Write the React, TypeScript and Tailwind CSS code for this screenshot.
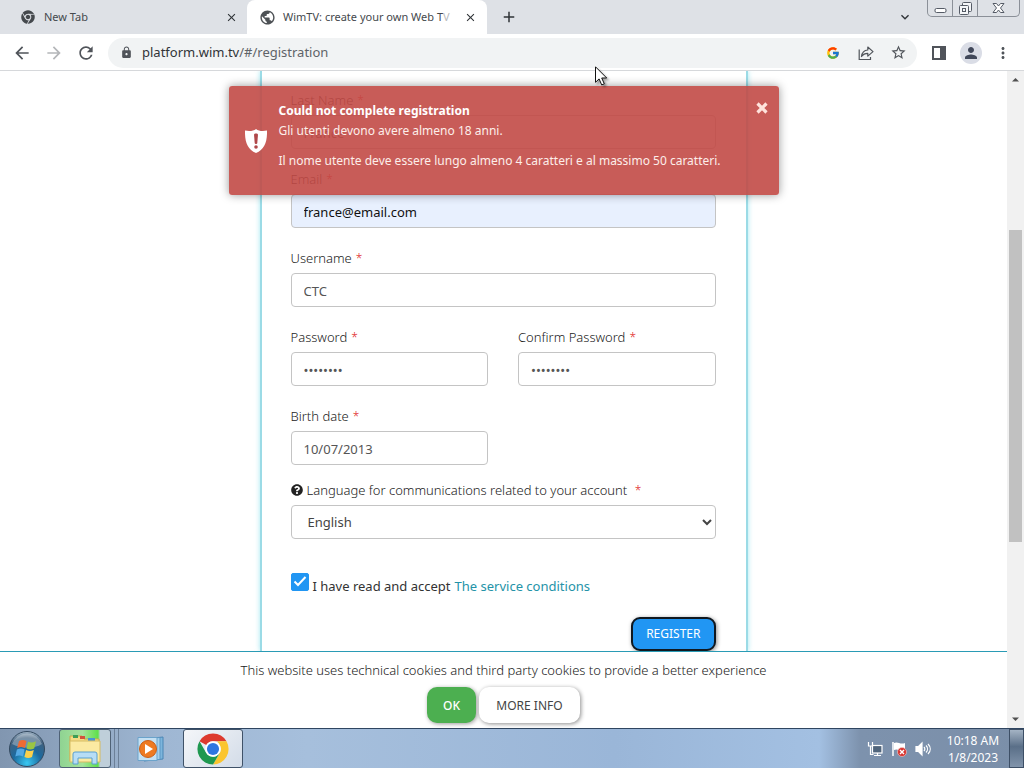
import type { ReactNode } from "react";
import { FaChrome, FaQuestionCircle } from "react-icons/fa";
import { FcGoogle } from "react-icons/fc";
import {
  MdAdd,
  MdArrowBack,
  MdArrowForward,
  MdClose,
  MdKeyboardArrowDown,
  MdLock,
  MdMoreVert,
  MdPerson,
  MdPublic,
  MdRefresh,
  MdStarBorder,
} from "react-icons/md";

const fieldClass =
  "h-[34px] w-full rounded-[4px] border border-[#c4c4c4] px-3 pt-0.5 text-[13px] outline-none";

function Label({ htmlFor, children }: { htmlFor: string; children: ReactNode }) {
  return (
    <label htmlFor={htmlFor} className="flex h-5 items-center pt-0.5 text-[13px] font-light text-[#222]">
      {children}
      <span className="ml-1 text-[12px] text-[#e02020]">*</span>
    </label>
  );
}

function Field({
  id,
  label,
  value,
  type = "text",
  className = "bg-white text-[#555]",
}: {
  id: string;
  label: string;
  value: string;
  type?: string;
  className?: string;
}) {
  return (
    <div className="flex min-w-0 flex-1 flex-col gap-[5px]">
      <Label htmlFor={id}>{label}</Label>
      <input id={id} type={type} defaultValue={value} className={`${fieldClass} ${className}`} />
    </div>
  );
}

function WindowControls() {
  return (
    <div className="mr-1 flex h-[17px] w-[93px] shrink-0 self-start rounded-b-[5px] border border-t-0 border-[#8b9098] text-[#555b66]">
      <button aria-label="Minimize" className="flex flex-1 items-center justify-center border-r border-[#8b9098]">
        <svg width="13" height="16" viewBox="0 0 13 16" fill="#fff" stroke="currentColor">
          <rect x="1" y="8.5" width="11" height="4" rx="1.5" />
        </svg>
      </button>
      <button aria-label="Restore" className="flex flex-1 items-center justify-center border-r border-[#8b9098]">
        <svg width="14" height="16" viewBox="0 0 14 16" fill="#f4f6f8" stroke="currentColor">
          <rect x="4.500" y="2.500" width="9" height="9" rx="1" />
          <rect x="1.500" y="5.500" width="9" height="9" rx="1" />
          <rect x="4.500" y="8.500" width="3" height="3" />
        </svg>
      </button>
      <button aria-label="Close window" className="flex w-[41px] items-center justify-center">
        <svg width="13" height="16" viewBox="0 0 13 16" fill="#fff" stroke="currentColor">
          <path d="M1 3.500h3.500l2 2.500 2-2.500H12L8.500 8l3.500 4.500H8.500l-2-2.500-2 2.500H1L4.500 8z" />
        </svg>
      </button>
    </div>
  );
}

function TabBar() {
  return (
    <header className="flex h-[34px] shrink-0 items-center bg-[#dee1e6] text-[11px] text-[#45494d]">
      <div className="flex h-full w-[247px] shrink-0 items-center rounded-br-lg pr-[7px] pl-[21px]">
        <FaChrome size={14} />
        <span className="ml-[9px] flex-1">New Tab</span>
        <button aria-label="Close New Tab" className="p-0.5">
          <MdClose size={13} color="#2f3337" />
        </button>
      </div>
      <div className="flex h-full w-[240px] shrink-0 items-center rounded-t-lg bg-white pr-2 pl-3">
        <MdPublic size={17} color="#4d5155" />
        <span className="ml-[7px] flex-1 whitespace-nowrap">
          WimTV: create your own Web T<span className="text-[#b9bbbd]">V</span>
        </span>
        <button aria-label="Close WimTV" className="p-0.5">
          <MdClose size={13} color="#2f3337" />
        </button>
      </div>
      <button aria-label="New tab" className="ml-[13px]">
        <MdAdd size={18} color="#2f3337" />
      </button>
      <div className="flex-1" />
      <button aria-label="Search tabs" className="mr-3.5">
        <MdKeyboardArrowDown size={16} color="#2f3337" />
      </button>
      <WindowControls />
    </header>
  );
}

function Toolbar() {
  return (
    <div className="flex h-[37px] shrink-0 items-center border-b border-[#d6d8db] bg-white px-3 pt-px text-[#50545a]">
      <button aria-label="Back">
        <MdArrowBack size={20} />
      </button>
      <button aria-label="Forward" className="ml-3 text-[#b4b6b9]">
        <MdArrowForward size={20} />
      </button>
      <button aria-label="Reload" className="ml-3">
        <MdRefresh size={20} />
      </button>
      <div className="ml-3 flex h-[30px] flex-1 items-center rounded-full bg-[#f1f3f4] pr-2.5 pl-3">
        <MdLock size={13} />
        <div className="ml-[9px] flex-1 text-[13px] text-[#5f6368]">
          <span className="text-[#303338]">platform.wim.tv</span>/#/registration
        </div>
        <FcGoogle size={14} />
        <button aria-label="Share" className="ml-[18px]">
          <svg width="16" height="16" viewBox="0 0 16 16" fill="none" stroke="currentColor" strokeWidth="1.2">
            <path d="M1.200 4.500v10h11.300v-2.500" />
            <path d="M3.500 11.500C4 7.500 6 5.200 9.800 5V2l5.200 4.600-5.200 4.500V8.300c-2.800 0-4.700.9-6.300 3.200z" strokeLinejoin="round" />
          </svg>
        </button>
        <button aria-label="Bookmark" className="ml-4">
          <MdStarBorder size={17} />
        </button>
      </div>
      <button aria-label="Side panel" className="ml-3.5">
        <svg width="16" height="16" viewBox="0 0 16 16" fill="none" stroke="currentColor" strokeWidth="2">
          <rect x="2" y="2" width="12" height="12" />
          <path d="M10 2h4v12h-4z" fill="currentColor" />
        </svg>
      </button>
      <button aria-label="Profile" className="ml-[13px] flex size-[22px] items-center justify-center rounded-full bg-[#dadde6]">
        <MdPerson size={18} color="#41485a" />
      </button>
      <button aria-label="Menu" className="ml-3">
        <MdMoreVert size={18} />
      </button>
    </div>
  );
}

function Alert() {
  return (
    <div
      role="alert"
      className="absolute inset-x-0 top-[15px] mx-auto flex h-[109px] w-full max-w-[550px] items-center rounded-[3px] bg-[#c24a46]/90 pl-4 text-[12px] leading-5 text-[#fdeeea] shadow-[0_0_10px_rgba(0,0,0,0.4)]"
    >
      <svg width="22" height="24" viewBox="0 0 22 24" className="shrink-0">
        <path d="M11 0c2.500 2 6.500 2.500 11 1.600C22.300 13 19.500 20.500 11 24 2.500 20.500-.3 13 0 1.600 4.500 2.500 8.500 2 11 0z" fill="#fff" />
        <path d="M9 5.500c0-1.500 4-1.500 4 0l-.7 8.500c-.2 1.300-2.400 1.300-2.600 0z" fill="#b0484a" />
        <circle cx="11" cy="18" r="1.800" fill="#b0484a" />
      </svg>
      <div className="ml-3 flex-1 pb-2.5">
        <h2 className="font-bold text-white">Could not complete registration</h2>
        <p>Gli utenti devono avere almeno 18 anni.</p>
        <p className="mt-2.5">Il nome utente deve essere lungo almeno 4 caratteri e al massimo 50 caratteri.</p>
      </div>
      <button aria-label="Dismiss" className="mt-4 mr-[11px] self-start">
        <svg width="12" height="12" viewBox="0 0 12 12" stroke="#ffe3dc" strokeWidth="3.200">
          <path d="M1.500 1.500l9 9M10.500 1.500l-9 9" />
        </svg>
      </button>
    </div>
  );
}

function RegistrationForm() {
  return (
    <form className="mx-auto flex w-full max-w-[488px] flex-col border-x-2 border-[#9bdbe6] pt-[19px] pr-[30px] pl-[29px] shadow-[0_0_5px_rgba(120,220,235,0.7)]">
      <div className="flex flex-col gap-5">
        <Field id="last-name" label="Last Name" value="France" />
        <Field id="email" label="Email" value="france@email.com" className="bg-[#e8f0fe] text-[#111]" />
        <Field id="username" label="Username" value="CTC" />
        <div className="flex gap-[30px]">
          <Field id="password" label="Password" value="password" type="password" />
          <Field id="confirm" label="Confirm Password" value="password" type="password" />
        </div>
        <div className="flex gap-[30px]">
          <Field id="birth" label="Birth date" value="10/07/2013" />
          <div className="flex-1" />
        </div>
      </div>
      <div className="mt-[15px] flex flex-col gap-[5px]">
        <div className="flex items-center gap-1">
          <FaQuestionCircle size={12} color="#222" />
          <Label htmlFor="language">Language for communications related to your account&nbsp;</Label>
        </div>
        <div className="relative">
          <select id="language" className={`${fieldClass} appearance-none bg-white pl-4 text-[#444]`}>
            <option>English</option>
          </select>
          <svg width="10" height="7" viewBox="0 0 10 7" className="pointer-events-none absolute top-3.5 right-1" fill="none" stroke="#444" strokeWidth="2">
            <path d="M1 1l4 4 4-4" />
          </svg>
        </div>
      </div>
      <div className="mt-[34px] flex h-[26px] gap-1 text-[13px] text-[#333]">
        <span className="relative size-[18px]">
          <input
            id="accept"
            type="checkbox"
            defaultChecked
            className="peer block size-[18px] appearance-none rounded-[2px] border border-[#2196f3] checked:bg-[#2196f3]"
          />
          <svg width="18" height="18" viewBox="0 0 18 18" className="pointer-events-none absolute inset-0 hidden peer-checked:block" fill="none" stroke="#fff" strokeWidth="2">
            <path d="M3.500 8.500l3.500 3.500 7.500-8" />
          </svg>
        </span>
        <div className="flex gap-1 self-end leading-[26px]">
          <label htmlFor="accept">I have read and accept</label>
          <a href="#/terms" className="text-[#2493a8]">
            The service conditions
          </a>
        </div>
      </div>
      <button
        type="button"
        className="mt-[18px] h-[34px] self-end rounded-[9px] border-2 border-[#101820] bg-[#2196f3] px-[13px] text-[12px] text-white shadow-[1px_1px_4px_rgba(0,0,0,0.45)]"
      >
        REGISTER
      </button>
    </form>
  );
}

function CookieBar() {
  return (
    <div className="flex h-[77px] shrink-0 flex-col items-center border-t border-[#2a9bb5] bg-white pt-2">
      <p className="text-[13px] leading-5 font-light text-[#222]">
        This website uses technical cookies and third party cookies to provide a better experience
      </p>
      <div className="mt-[7px] flex gap-[3px] text-[12px]">
        <button className="h-9 w-[49px] rounded-[10px] bg-[#4caf50] pt-px font-medium text-white shadow-[1px_1px_4px_rgba(0,0,0,0.4)]">
          OK
        </button>
        <button className="h-9 w-[101px] rounded-[10px] bg-white pt-px text-[#444] shadow-[1px_1px_4px_rgba(0,0,0,0.45)]">
          MORE INFO
        </button>
      </div>
    </div>
  );
}

function Scrollbar() {
  return (
    <div className="flex w-[17px] shrink-0 flex-col items-center bg-[#f1f1f1]">
      <svg width="7" height="17" viewBox="0 0 7 17" fill="#505050">
        <path d="M0 10.500h7L3.500 7z" />
      </svg>
      <div className="flex-[142]" />
      <div className="w-[13px] flex-[312] bg-[#c1c1c1]" />
      <div className="flex-[169]" />
      <svg width="7" height="17" viewBox="0 0 7 17" fill="#505050">
        <path d="M0 6.500h7L3.500 10z" />
      </svg>
    </div>
  );
}

function ChromeLogo() {
  return (
    <svg width="34" height="34" viewBox="0 0 48 48">
      <path d="M24 2a22 22 0 0 1 19.050 11H24a11 11 0 0 0-9.530 5.500L4.950 13A22 22 0 0 1 24 2z" fill="#dd3a2e" />
      <path d="M43.050 13A22 22 0 0 1 24 46l9.530-16.500A11 11 0 0 0 33.500 18.400L30 13z" fill="#fbc52f" />
      <path d="M24 46A22 22 0 0 1 4.950 13l9.520 16.500A11 11 0 0 0 28 34.200L33.500 29.600z" fill="#1f9850" />
      <circle cx="24" cy="24" r="11" fill="#fff" />
      <circle cx="24" cy="24" r="8.600" fill="#2f76e0" />
    </svg>
  );
}

function StartOrb() {
  return (
    <svg width="38" height="38" viewBox="0 0 38 38">
      <defs>
        <radialGradient id="orb" cx="50%" cy="90%" r="90%">
          <stop offset="0" stopColor="#39c8f2" />
          <stop offset="0.45" stopColor="#1c6a9f" />
          <stop offset="0.8" stopColor="#41617f" />
          <stop offset="1" stopColor="#a9bccc" />
        </radialGradient>
      </defs>
      <circle cx="19" cy="19" r="17.500" fill="url(#orb)" stroke="#33495f" />
      <path d="M4 14a16 16 0 0 1 30 0c-8 5-20 5-30 0z" fill="#fff" opacity="0.3" />
      <path d="M11 11c3-1.500 5-1.200 7.500 0l-1.600 7c-2.500-1.300-4.700-1.300-7.700 0z" fill="#ee6b34" />
      <path d="M20 11.700c2.800 1.200 5 1 8-.5l-1.800 7.200c-2.800 1.300-5 1.300-7.700 0z" fill="#9ac543" />
      <path d="M8.900 19.500c3-1.300 5-1.300 7.700 0L15 26.500c-2.500-1.300-4.800-1.300-7.700 0z" fill="#54a9e4" />
      <path d="M18.100 20c2.700 1.300 5 1.200 7.700 0L24 27c-2.800 1.500-5 1.300-7.600 0z" fill="#fbd04c" />
    </svg>
  );
}

function ExplorerIcon() {
  return (
    <svg width="34" height="34" viewBox="0 0 34 34">
      <path d="M2 4h12l2 3h15v22H2z" fill="#f3dc84" stroke="#c9a94d" />
      <path d="M5 3h5v3H5z" fill="#3c9e57" />
      <path d="M12 4h5v3h-5z" fill="#d2533c" />
      <path d="M20 6h7v3h-7z" fill="#4a93d1" />
      <path d="M2 9h30v21H2z" fill="#fbeaa2" stroke="#d6bb62" />
      <path d="M5 32V22q0-2 2-2h20q2 0 2 2v10h-5v-6H10v6z" fill="#b7ddf5" stroke="#5ba0d0" />
    </svg>
  );
}

function MediaIcon() {
  return (
    <svg width="28" height="26" viewBox="0 0 28 26">
      <path d="M7 3l19-2v22l-19 2z" fill="#7db5dc" stroke="#4b86b5" />
      <path d="M5 2.500l18-1v22l-18 1z" fill="#a5d0ec" stroke="#5c97c3" />
      <path d="M1 1.500h19v23H1z" fill="#c4e0f3" stroke="#6ba3cb" />
      <circle cx="11" cy="13" r="8.500" fill="#ee7a22" stroke="#c95f18" />
      <path d="M8 8l8 5-8 5z" fill="#fff" />
    </svg>
  );
}

function Taskbar() {
  return (
    <footer className="flex h-10 shrink-0 items-center border-t border-[#2f4560] bg-[linear-gradient(90deg,#8196b0_0%,#9fb7d3_16%,#a6bfdc_30%,#9ab6d8_60%,#a3c0e2_80%,#7d92ad_84%,#7b8fa9_100%)]">
      <button aria-label="Start" className="ml-2 shrink-0">
        <StartOrb />
      </button>
      <button
        aria-label="File Explorer"
        className="ml-[13px] flex h-full w-[52px] items-center justify-center rounded-[3px] border border-[#4f6276] bg-[linear-gradient(90deg,#8fd392_0%,#a5e39c_45%,#5fe04a_76%,#bfcfda_80%)]"
      >
        <ExplorerIcon />
      </button>
      <div className="h-full w-1 border-r border-[#6c8098]" />
      <div className="h-full w-1 border-r border-[#6c8098]" />
      <button aria-label="Media Player" className="ml-[18px]">
        <MediaIcon />
      </button>
      <button
        aria-label="Google Chrome"
        className="ml-[18px] flex h-full w-[60px] items-center justify-center rounded-[3px] border border-[#3f5268] bg-[linear-gradient(135deg,#f4f6f9,#d3dce8)]"
      >
        <ChromeLogo />
      </button>
      <div className="flex-1" />
      <div className="flex items-center gap-2">
        <svg width="16" height="16" viewBox="0 0 16 16" fill="none" stroke="#fff" strokeWidth="1.200">
          <rect x="5.500" y="4.500" width="9.500" height="7.500" fill="#50657c" />
          <path d="M7 14.500h7M10.500 12v2.500M1.500 1v4h4V1M3.500 5v8.500h3" />
        </svg>
        <svg width="16" height="16" viewBox="0 0 16 16">
          <path d="M2 1v14" stroke="#fff" strokeWidth="1.500" />
          <path d="M3 2c4-2 6 2 11 0v7c-5 2-7-2-11 0z" fill="#fff" />
          <circle cx="11" cy="11" r="4.500" fill="#d8342f" stroke="#f6d5d2" strokeWidth="0.600" />
          <path d="M9 9l4 4M13 9l-4 4" stroke="#fff" strokeWidth="1.400" />
        </svg>
        <svg width="16" height="16" viewBox="0 0 16 16" fill="none" stroke="#fff" strokeWidth="1.200">
          <path d="M1 5.500h2.500L7 2v12l-3.500-3.500H1z" fill="#fff" />
          <path d="M9 6c1 1.200 1 2.800 0 4M11 4.500c2 2 2 5 0 7M13 3c3 3 3 7 0 10" />
        </svg>
      </div>
      <div className="mr-2 ml-3.5 w-[56px] text-center text-[12px] leading-[17px] whitespace-nowrap text-white">
        <div>10:18 AM</div>
        <div>1/8/2023</div>
      </div>
      <button
        aria-label="Show desktop"
        className="h-full w-[15px] border border-[#3d4f66] bg-[linear-gradient(180deg,#a4b3c4,#5a6f88_45%,#8194ab)]"
      />
    </footer>
  );
}

export default function App() {
  return (
    <div className="flex h-screen flex-col overflow-hidden bg-white font-['Noto_Sans','Open_Sans',sans-serif]">
      <TabBar />
      <Toolbar />
      <main className="flex min-h-0 flex-1">
        <div className="relative flex min-w-0 flex-1 flex-col">
          <div className="min-h-0 flex-1 overflow-hidden">
            <RegistrationForm />
          </div>
          <CookieBar />
          <Alert />
        </div>
        <Scrollbar />
      </main>
      <Taskbar />
      <svg width="13" height="20" viewBox="0 0 13 20" className="pointer-events-none absolute top-[66px] left-[595px] drop-shadow-[2px_2px_1px_rgba(0,0,0,0.35)]">
        <path d="M.5.8v15.500l3.600-3.400 2.600 6 2.600-1.100-2.600-5.800h5z" fill="#fff" stroke="#111" />
      </svg>
    </div>
  );
}
